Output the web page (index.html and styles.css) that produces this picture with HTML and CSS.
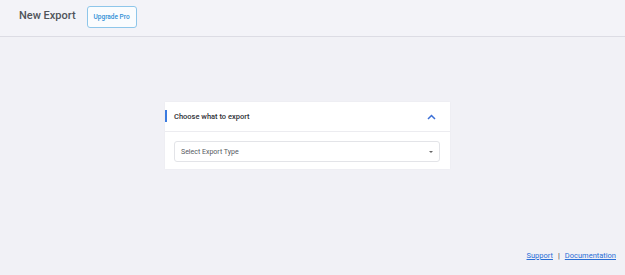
FILE: index.html
```html
<!DOCTYPE html>
<html>
<head>
<meta charset="utf-8">
<link rel="stylesheet" href="styles.css">
</head>
<body>
<div class="page">
  <header class="topbar">
    <h1 class="title">New Export</h1>
    <button class="upgrade">Upgrade Pro</button>
  </header>
  <main class="main">
    <section class="card">
      <div class="card-head">
        <span class="card-title">Choose what to export</span>
        <svg class="chev" width="9" height="6" viewBox="0 0 9 6"><path d="M1 5 L4.5 1.5 L8 5" fill="none" stroke="#3b6fd6" stroke-width="1.5"/></svg>
      </div>
      <div class="card-body">
        <div class="select">
          <span>Select Export Type</span>
          <span class="caret"></span>
        </div>
      </div>
    </section>
  </main>
  <footer class="footer">
    <a href="#">Support</a>
    <span class="sep">|</span>
    <a href="#">Documentation</a>
  </footer>
</div>
</body>
</html>
```
FILE: styles.css
```css
html, body {
  margin: 0;
  padding: 0;
}
body {
  background: #f1f1f6;
  font-family: Roboto, "Liberation Sans", Arial, sans-serif;
  width: 625px;
  height: 275px;
  overflow: hidden;
}
.page {
  display: flex;
  flex-direction: column;
  height: 275px;
}
.topbar {
  height: 36px;
  border-bottom: 1px solid #dcdce4;
  display: flex;
  align-items: center;
  padding-left: 19px;
  gap: 11px;
  box-sizing: content-box;
  background: #f3f3f8;
}
.title {
  margin: 0;
  font-size: 11px;
  font-weight: 500;
  color: #50535a;
  position: relative;
  top: -3px;
}
.upgrade {
  font-family: inherit;
  font-size: 6.5px;
  font-weight: 500;
  color: #2f8fd6;
  background: #fafcfe;
  border: 1px solid #8ec6ea;
  border-radius: 3px;
  height: 22px;
  width: 50px;
  padding: 0;
  position: relative;
  top: -1px;
}
.main {
  flex: 1;
  display: flex;
  justify-content: center;
  padding-top: 65px;
  padding-right: 10px;
}
.card {
  width: 285px;
  height: 67px;
  background: #fff;
  box-shadow: 0 0 2px rgba(0,0,0,0.04);
}
.card-head {
  height: 29px;
  border-bottom: 1px solid #ececf0;
  display: flex;
  align-items: center;
  justify-content: space-between;
  padding: 0 14px 0 9px;
  position: relative;
}
.card-head::before {
  content: "";
  position: absolute;
  left: 0;
  top: 8px;
  width: 2px;
  height: 12px;
  background: #3b7be0;
}
.card-title {
  font-size: 7.5px;
  font-weight: 500;
  color: #2f3238;
}
.chev {
  display: block;
}
.card-body {
  padding: 9px 10px 0 9px;
}
.select {
  height: 19px;
  border: 1px solid #e3e4e8;
  border-radius: 3px;
  display: flex;
  align-items: center;
  justify-content: space-between;
  padding: 0 6px;
  font-size: 7px;
  color: #555a62;
}
.caret {
  width: 0;
  height: 0;
  border-left: 2px solid transparent;
  border-right: 2px solid transparent;
  border-top: 2.5px solid #666;
}
.footer {
  display: flex;
  justify-content: flex-end;
  align-items: center;
  gap: 5px;
  padding: 0 9px 15px 0;
  font-size: 7.5px;
}
.footer a {
  color: #2a6fd6;
  text-decoration: underline;
}
.sep {
  color: #333;
}
```
